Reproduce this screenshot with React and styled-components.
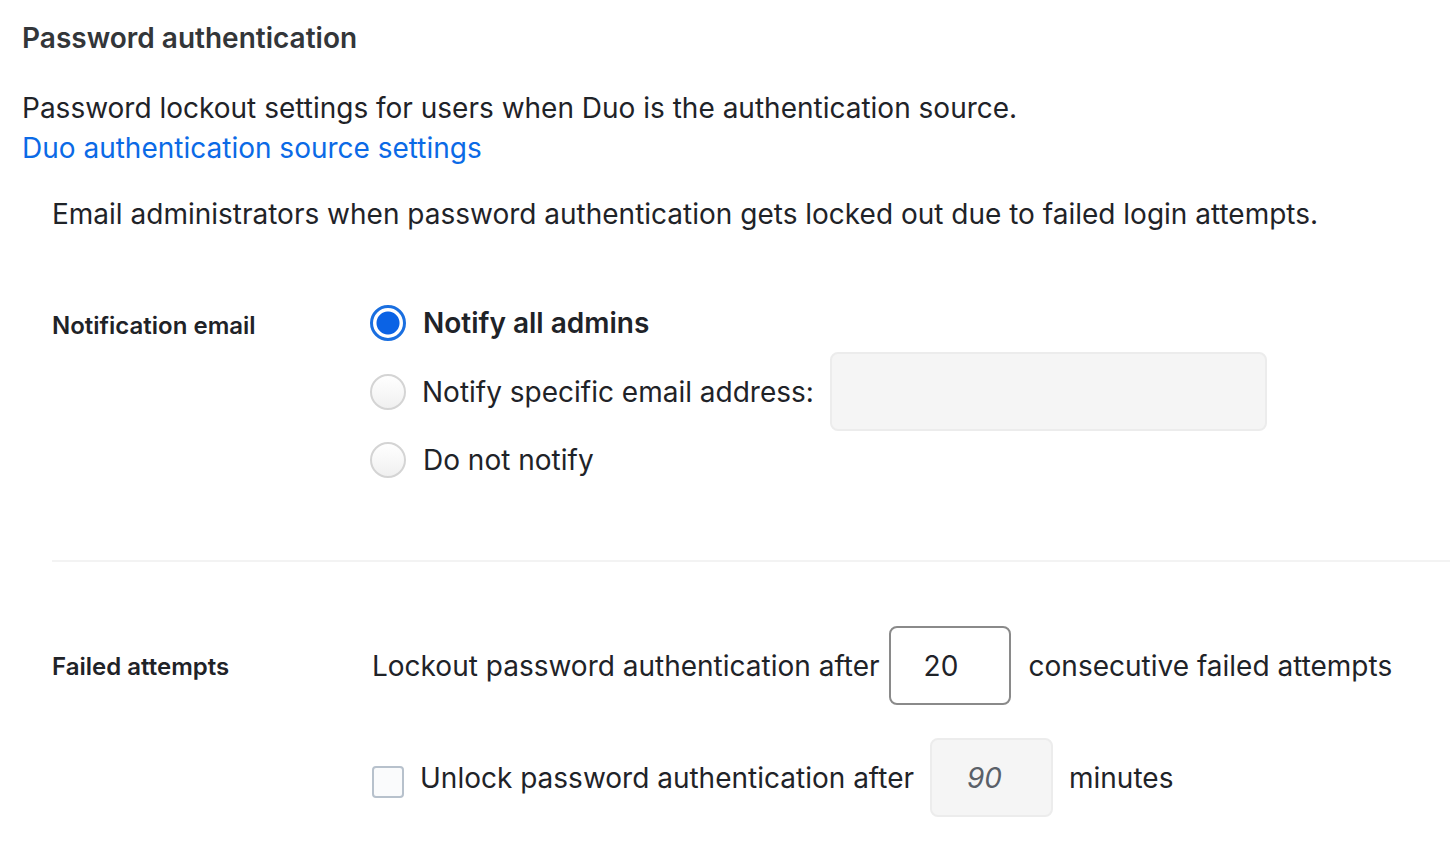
import styled, { createGlobalStyle } from "styled-components"

const GlobalStyle = createGlobalStyle`
    body {
        margin: 0;
        background: #ffffff;
        font-family: Inter, "Noto Sans", sans-serif;
        color: #1f2328;
    }
`

const Page = styled.div`
    padding: 20px 0 0 22px;
`

const Title = styled.h2`
    margin: 0;
    font-size: 28px;
    font-weight: 600;
    color: #333639;
    line-height: 36px;
`

const Intro = styled.p`
    margin: 32px 0 0;
    font-size: 28px;
    line-height: 40px;
`

const Link = styled.a`
    color: #0b6ae6;
    text-decoration: none;
`

const Section = styled.div`
    padding-left: 30px;
`

const Lead = styled.p`
    margin: 26px 0 0;
    font-size: 28px;
    line-height: 40px;
`

const FieldRow = styled.div`
    display: grid;
    grid-template-columns: 318px 1fr;
    padding: ${(p) => p.$pad};
`

const FieldLabel = styled.div`
    font-size: 24px;
    font-weight: 600;
    line-height: 34px;
    padding-top: ${(p) => p.$top}px;
`

const Options = styled.div`
    display: flex;
    flex-direction: column;
    gap: ${(p) => p.$gap}px;
`

const OptionRow = styled.label`
    display: flex;
    align-items: center;
    gap: ${(p) => p.$gap || 17}px;
    font-size: 28px;
    font-weight: ${(p) => (p.$bold ? 600 : 400)};
    min-height: 36px;
    margin-top: ${(p) => p.$mt || 0}px;
`

const Radio = styled.span`
    width: 36px;
    height: 36px;
    box-sizing: border-box;
    border-radius: 50%;
    flex-shrink: 0;
    border: ${(p) => (p.$on ? "3px solid #1a6fe0" : "2px solid #d4d4d4")};
    background: ${(p) =>
        p.$on
            ? "radial-gradient(circle, #0b63e5 0 11px, #ffffff 12px)"
            : "linear-gradient(#ffffff, #f0f0f0)"};
`

const TextBox = styled.div`
    box-sizing: border-box;
    width: ${(p) => p.$w}px;
    height: 79px;
    border-radius: 8px;
    border: ${(p) => (p.$disabled ? "2px solid #ececec" : "2px solid #8a8a8a")};
    background: ${(p) => (p.$disabled ? "#f5f5f5" : "#ffffff")};
    display: flex;
    align-items: center;
    padding-left: ${(p) => p.$pl || 0}px;
    font-size: 28px;
    font-style: ${(p) => (p.$disabled ? "italic" : "normal")};
    color: ${(p) => (p.$disabled ? "#5a6068" : "#1f2328")};
`

const Divider = styled.hr`
    margin: 0;
    border: 0;
    border-top: 2px solid #f3f3f3;
`

const Inline = styled.div`
    display: flex;
    align-items: center;
    font-size: 28px;
    gap: ${(p) => p.$gap}px;
    margin-left: 2px;
`

const After = styled.span`
    margin-left: 9px;
`

const Checkbox = styled.span`
    width: 32px;
    height: 32px;
    box-sizing: border-box;
    border: 2px solid #b7c1cc;
    border-radius: 4px;
    background: #fafbfc;
    flex-shrink: 0;
    margin-top: 8px;
`

export default function App() {
    return (
        <Page>
            <GlobalStyle />
            <Title>Password authentication</Title>
            <Intro>
                Password lockout settings for users when Duo is the authentication source.
                <br />
                <Link href="#">Duo authentication source settings</Link>
            </Intro>
            <Section>
                <Lead>
                    Email administrators when password authentication gets locked out due to failed login attempts.
                </Lead>
                <FieldRow $pad="71px 0 82px">
                    <FieldLabel $top={4}>Notification email</FieldLabel>
                    <Options $gap={0}>
                        <OptionRow $bold>
                            <Radio $on />
                            Notify all admins
                        </OptionRow>
                        <OptionRow $mt={11} $gap={16}>
                            <Radio />
                            Notify specific email address:
                            <TextBox $w={437} $disabled />
                        </OptionRow>
                        <OptionRow $mt={11}>
                            <Radio />
                            Do not notify
                        </OptionRow>
                    </Options>
                </FieldRow>
                <Divider />
                <FieldRow $pad="64px 0 40px">
                    <FieldLabel $top={24}>Failed attempts</FieldLabel>
                    <Options $gap={33}>
                        <Inline $gap={9}>
                            Lockout password authentication after
                            <TextBox $w={122} $pl={33}>20</TextBox>
                            <After>consecutive failed attempts</After>
                        </Inline>
                        <Inline $gap={16}>
                            <Checkbox />
                            Unlock password authentication after
                            <TextBox $w={123} $disabled $pl={35}>90</TextBox>
                            minutes
                        </Inline>
                    </Options>
                </FieldRow>
            </Section>
        </Page>
    )
}
